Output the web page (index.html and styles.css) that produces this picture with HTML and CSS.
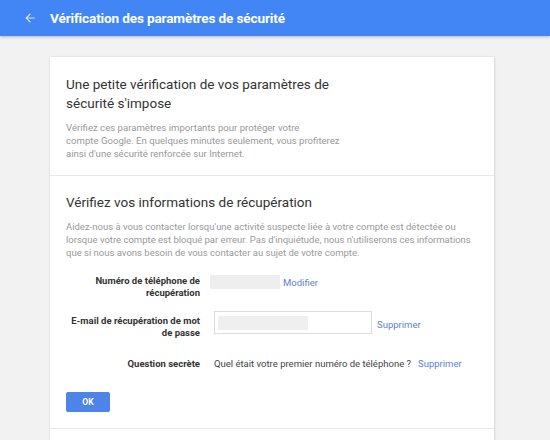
FILE: index.html
```html
<!DOCTYPE html>
<html lang="fr">
<head>
<meta charset="utf-8">
<link rel="stylesheet" href="styles.css">
</head>
<body>
<header class="topbar">
  <svg class="back" width="14" height="14" viewBox="0 0 24 24"><path d="M20 11H7.83l5.59-5.59L12 4l-8 8 8 8 1.41-1.41L7.83 13H20v-2z" fill="#cfe0fc"/></svg>
  <h1 class="topbar-title">Vérification des paramètres de sécurité</h1>
</header>
<main class="page">
  <section class="card">
    <div class="section first">
      <h2 class="heading">Une petite vérification de vos paramètres de sécurité s'impose</h2>
      <p class="desc narrow">Vérifiez ces paramètres importants pour protéger votre<br>compte Google. En quelques minutes seulement, vous profiterez<br>ainsi d'une sécurité renforcée sur Internet.</p>
    </div>
    <div class="section second">
      <h2 class="heading">Vérifiez vos informations de récupération</h2>
      <p class="desc">Aidez-nous à vous contacter lorsqu'une activité suspecte liée à votre compte est détectée ou lorsque votre compte est bloqué par erreur. Pas d'inquiétude, nous n'utiliserons ces informations que si nous avons besoin de vous contacter au sujet de votre compte.</p>
      <div class="form">
        <div class="label">Numéro de téléphone de récupération</div>
        <div class="value"><span class="blur phone"></span><a class="link l-mod">Modifier</a></div>
        <div class="label">E-mail de récupération de mot de passe</div>
        <div class="value"><span class="input"><span class="blur mail"></span></span><a class="link l-mail">Supprimer</a></div>
        <div class="label last">Question secrète</div>
        <div class="value last"><span class="q">Quel était votre premier numéro de téléphone ?</span><a class="link l-q">Supprimer</a></div>
      </div>
      <button class="ok">OK</button>
    </div>
    <div class="section third"></div>
  </section>
</main>
</body>
</html>
```
FILE: styles.css
```css
html, body { margin: 0; padding: 0; }
body {
  background: #f2f2f2;
  font-family: Roboto, "Liberation Sans", Arial, sans-serif;
  width: 550px;
  height: 440px;
  overflow: hidden;
}
.topbar {
  height: 36px;
  background: #4285f4;
  display: flex;
  align-items: center;
  box-shadow: 0 1px 3px rgba(0,0,0,0.25);
  position: relative;
  z-index: 1;
}
.back { margin-left: 23px; margin-right: 13px; }
.topbar-title {
  margin: 0;
  font-size: 13.6px;
  font-weight: 700;
  color: #fff;
  letter-spacing: -0.15px;
}
.page { padding: 21px 56px 0 50px; }
.card {
  background: #fff;
  box-shadow: 0 0 2px rgba(0,0,0,0.12), 1px 1px 2px rgba(0,0,0,0.08);
}
.section { padding: 18px 16px 13px 16px; border-bottom: 1px solid #e8e8e8; }
.first { padding-bottom: 15px; }
.heading {
  margin: 0;
  font-size: 13.5px;
  font-weight: 400;
  color: #333;
  line-height: 19px;
  max-width: 290px;
}
.second .heading { max-width: none; }
.desc {
  margin: 8px 0 0;
  font-size: 9.5px;
  line-height: 13px;
  color: #999;
}
.narrow { font-size: 9.6px; white-space: nowrap; }
.second .desc { margin-top: 8px; }
.second { padding-top: 17px; padding-bottom: 16px; }
.third { height: 40px; border-bottom: none; }
.form {
  display: grid;
  grid-template-columns: 131px auto;
  column-gap: 14px;
  row-gap: 16px;
  margin-top: 16px;
  margin-left: 3px;
  align-items: start;
  font-size: 9.5px;
}
.label {
  text-align: right;
  font-weight: 700;
  color: #333;
  line-height: 12px;
}
.last { margin-top: 3px; }
.value { display: flex; align-items: center; color: #555; }
.blur { display: block; background: #eeeeee; }
.phone { width: 70px; height: 14px; margin-left: -4px; }
.input {
  display: flex; align-items: center;
  width: 153px; height: 21px;
  border: 1px solid #dcdcdc;
  padding-left: 3px;
  margin-top: -4px;
}
.mail { width: 90px; height: 14px; background: #efefef; }
.link { color: #5a7fd6; }
.l-mod { margin-left: 3px; }
.l-mail { margin-left: 5px; }
.l-q { margin-left: 7px; }
.q { color: #444; }
.ok {
  margin-top: 22px;
  width: 44px; height: 20px;
  background: #4c84e8;
  border: none;
  border-radius: 2px;
  color: #fff;
  font-weight: 700;
  font-size: 8.5px;
  font-family: inherit;
  padding: 0;
}
```
